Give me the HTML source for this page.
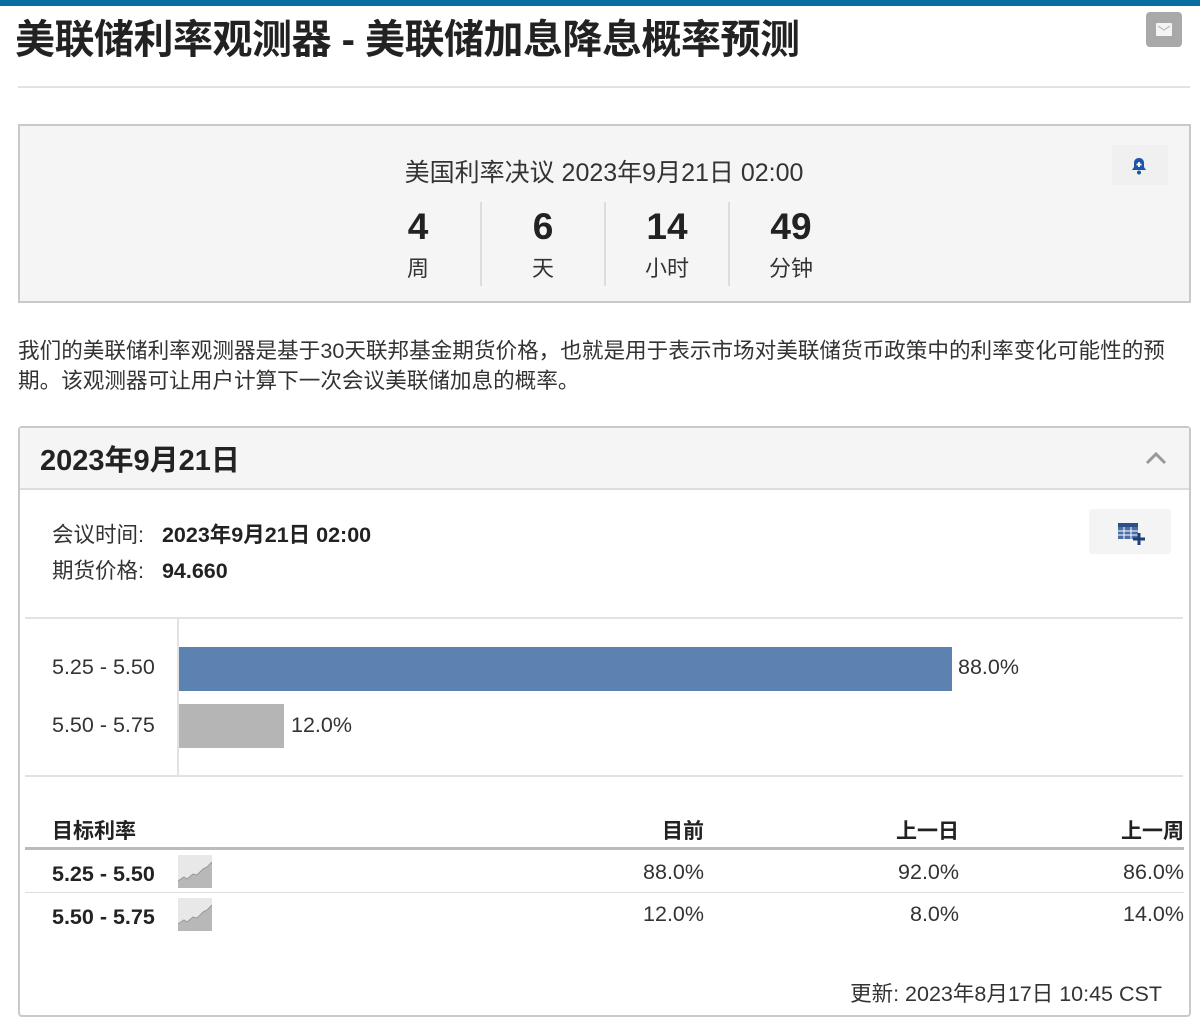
<!DOCTYPE html><html><head><meta charset="utf-8"><style>
*{box-sizing:border-box;margin:0;padding:0}
body{width:1200px;height:1018px;background:#fff;font-family:"Liberation Sans","Noto Sans CJK SC",sans-serif;color:#333;position:relative;overflow:hidden}
.a{position:absolute;white-space:nowrap}
</style></head><body>
<div class="a" style="left:0;top:0;width:1200px;height:6px;background:#0a6fa0"></div>
<div class="a" style="left:15px;top:16px;font-size:40px;font-weight:bold;color:#222;line-height:48px;letter-spacing:-0.5px">美联储利率观测器 - 美联储加息降息概率预测</div>
<div class="a" style="left:1146px;top:12px;width:36px;height:35px;background:#a9a9a9;border-radius:4px"><svg style="position:absolute;left:10px;top:11px" width="16" height="13"><rect width="16" height="13" rx="1" fill="#f4f4f4"/><path d="M2 3l6 4 6-4" stroke="#bbb" stroke-width="1.2" fill="none"/></svg></div>
<div class="a" style="left:18px;top:86px;width:1172px;height:2px;background:#e2e2e2"></div>

<div class="a" style="left:18px;top:124px;width:1173px;height:179px;background:#f5f5f5;border:2px solid #c9c9c9"></div>
<div class="a" style="left:0;top:153px;width:1208px;text-align:center;font-size:25px;color:#333">美国利率决议 2023年9月21日 02:00</div>
<div class="a" style="left:1112px;top:145px;width:56px;height:40px;background:#f0f0f0"></div>
<svg class="a" style="left:1130px;top:157px" width="18" height="18" viewBox="0 0 18 18"><path d="M9 1c-3 0-5 2-5 5v4l-2 3h14l-2-3V6c0-3-2-5-5-5z" fill="#1a56a8"/><circle cx="9" cy="15.5" r="2" fill="#1a56a8"/><path d="M9 5v5M6.5 7.5h5" stroke="#fff" stroke-width="1.8"/></svg>
<div class="a" style="left:356px;top:202px;width:496px;display:flex;">
<div style="width:124px;text-align:center"><div style="font-size:37px;font-weight:bold;color:#222;line-height:50px">4</div><div style="font-size:22px;line-height:34px">周</div></div>
<div style="width:124px;text-align:center;border-left:2px solid #ddd"><div style="font-size:37px;font-weight:bold;color:#222;line-height:50px">6</div><div style="font-size:22px;line-height:34px">天</div></div>
<div style="width:124px;text-align:center;border-left:2px solid #ddd"><div style="font-size:37px;font-weight:bold;color:#222;line-height:50px">14</div><div style="font-size:22px;line-height:34px">小时</div></div>
<div style="width:124px;text-align:center;border-left:2px solid #ddd"><div style="font-size:37px;font-weight:bold;color:#222;line-height:50px">49</div><div style="font-size:22px;line-height:34px">分钟</div></div>
</div>

<div class="a" style="left:18px;top:336px;font-size:21.6px;line-height:30px;color:#333">我们的美联储利率观测器是基于30天联邦基金期货价格，也就是用于表示市场对美联储货币政策中的利率变化可能性的预<br>期。该观测器可让用户计算下一次会议美联储加息的概率。</div>

<div class="a" style="left:18px;top:426px;width:1173px;height:591px;border:2px solid #c9c9c9;border-radius:4px"></div>
<div class="a" style="left:20px;top:428px;width:1169px;height:62px;background:#f5f5f5;border-bottom:2px solid #ddd"></div>
<div class="a" style="left:40px;top:437px;font-size:29px;font-weight:bold;color:#222">2023年9月21日</div>
<svg class="a" style="left:1145px;top:451px" width="22" height="14"><path d="M2 12l9-9 9 9" stroke="#999" stroke-width="3" fill="none"/></svg>

<div class="a" style="left:52px;top:521px;font-size:21.5px;line-height:28px">会议时间: <b style="margin-left:12px;color:#222">2023年9月21日 02:00</b></div>
<div class="a" style="left:52px;top:557px;font-size:21.5px;line-height:28px">期货价格: <b style="margin-left:12px;color:#222">94.660</b></div>
<div class="a" style="left:1089px;top:509px;width:82px;height:45px;background:#f4f4f4;border-radius:3px"></div>
<svg class="a" style="left:1117px;top:521px" width="30" height="26" viewBox="0 0 30 26"><rect x="1" y="2" width="20" height="16" fill="#4a6fa8"/><rect x="1" y="2" width="20" height="4" fill="#2c4f88"/><g stroke="#fff" stroke-width="1"><path d="M1 10h20M1 14h20M7 6v12M14 6v12"/></g><path d="M22 12v12M16 18h12" stroke="#1c3f78" stroke-width="3"/></svg>

<div class="a" style="left:25px;top:617px;width:1158px;height:2px;background:#e2e2e2"></div>
<div class="a" style="left:25px;top:775px;width:1158px;height:2px;background:#e2e2e2"></div>
<div class="a" style="left:177px;top:619px;width:2px;height:156px;background:#e2e2e2"></div>
<div class="a" style="left:52px;top:655px;font-size:21.5px">5.25 - 5.50</div>
<div class="a" style="left:52px;top:713px;font-size:21.5px">5.50 - 5.75</div>
<div class="a" style="left:179px;top:647px;width:773px;height:44px;background:#5b82b0"></div>
<div class="a" style="left:958px;top:655px;font-size:21.5px">88.0%</div>
<div class="a" style="left:179px;top:704px;width:105px;height:44px;background:#b5b5b5"></div>
<div class="a" style="left:291px;top:713px;font-size:21.5px">12.0%</div>

<div class="a" style="left:52px;top:815px;font-size:21px;font-weight:bold;color:#222">目标利率</div>
<div class="a" style="left:580px;top:815px;width:124px;text-align:right;font-size:21px;font-weight:bold;color:#222">目前</div>
<div class="a" style="left:835px;top:815px;width:124px;text-align:right;font-size:21px;font-weight:bold;color:#222">上一日</div>
<div class="a" style="left:1060px;top:815px;width:124px;text-align:right;font-size:21px;font-weight:bold;color:#222">上一周</div>
<div class="a" style="left:25px;top:847px;width:1159px;height:3px;background:#bbb"></div>
<div class="a" style="left:25px;top:892px;width:1159px;height:1px;background:#ddd"></div>
<div class="a" style="left:52px;top:862px;font-size:21.5px;font-weight:bold;color:#222">5.25 - 5.50</div>
<div class="a" style="left:52px;top:905px;font-size:21.5px;font-weight:bold;color:#222">5.50 - 5.75</div>
<svg class="a" style="left:178px;top:855px" width="34" height="33"><rect width="34" height="33" fill="#e8e8e8"/><path d="M0 26l6-4 3 2 6-5 4 1 6-6 4-2 5-5V33H0z" fill="#b8b8b8"/><path d="M0 26l6-4 3 2 6-5 4 1 6-6 4-2 5-5" stroke="#999" fill="none"/></svg>
<svg class="a" style="left:178px;top:898px" width="34" height="33"><rect width="34" height="33" fill="#e8e8e8"/><path d="M0 26l6-4 3 2 6-5 4 1 6-6 4-2 5-5V33H0z" fill="#b8b8b8"/><path d="M0 26l6-4 3 2 6-5 4 1 6-6 4-2 5-5" stroke="#999" fill="none"/></svg>
<div class="a" style="left:580px;top:860px;width:124px;text-align:right;font-size:21.5px">88.0%</div>
<div class="a" style="left:835px;top:860px;width:124px;text-align:right;font-size:21.5px">92.0%</div>
<div class="a" style="left:1060px;top:860px;width:124px;text-align:right;font-size:21.5px">86.0%</div>
<div class="a" style="left:580px;top:902px;width:124px;text-align:right;font-size:21.5px">12.0%</div>
<div class="a" style="left:835px;top:902px;width:124px;text-align:right;font-size:21.5px">8.0%</div>
<div class="a" style="left:1060px;top:902px;width:124px;text-align:right;font-size:21.5px">14.0%</div>
<div class="a" style="left:740px;top:977px;width:422px;text-align:right;font-size:21.5px">更新: 2023年8月17日 10:45 CST</div>
</body></html>
